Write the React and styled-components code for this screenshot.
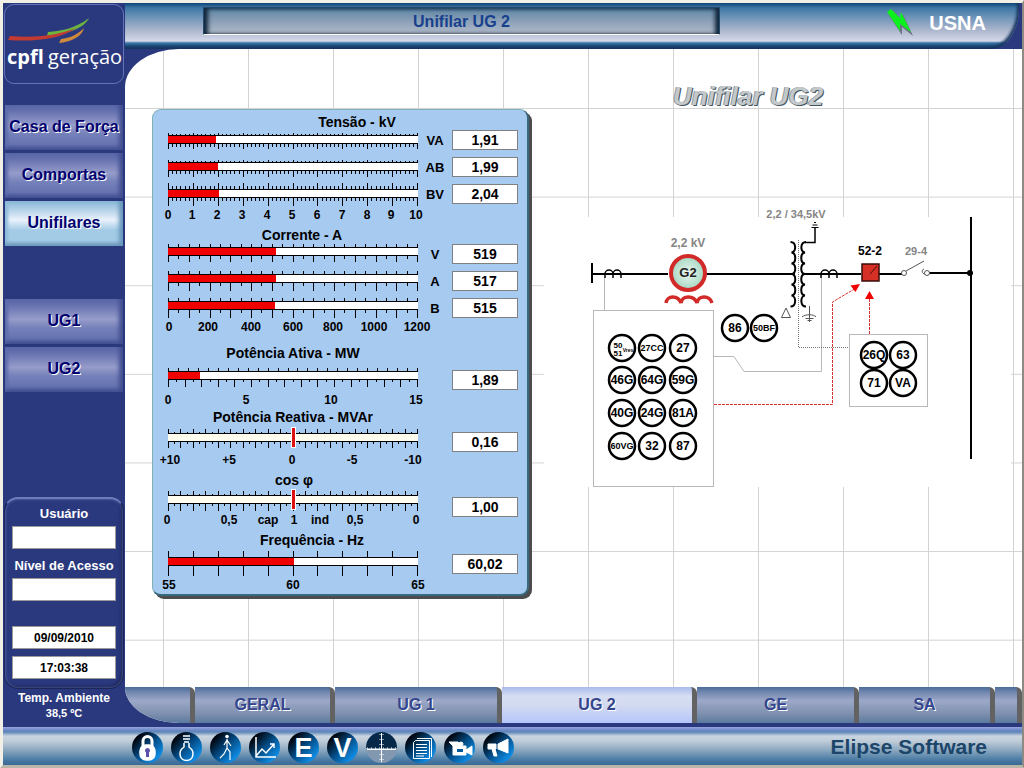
import React, { useId } from 'react';
import styled, { createGlobalStyle } from 'styled-components';

const GlobalStyle = createGlobalStyle`
    * {
        box-sizing: border-box;
    }
    body {
        margin: 0;
        font-family: 'Liberation Sans', Arial, sans-serif;
        font-weight: bold;
        background: #ece9d8;
    }
    button, input, output {
        font: inherit;
    }
`;

const Screen = styled.div`
    display: flex;
    flex-direction: column;
    min-height: 100vh;
    border: 3px solid #f1efe6;
    border-right: 2px solid #8d8a83;
    border-bottom-color: #b9b5a8;
    background: #2a397e;
`;

const Body = styled.div`
    display: flex;
    flex: 1;
`;

/* sidebar */

const Sidebar = styled.aside`
    display: flex;
    flex-direction: column;
    flex: none;
    width: 122px;
    padding: 1px 1px 6px 1px;
`;

const LogoBox = styled.div`
    height: 80px;
    border: 1px solid #6473b4;
    border-radius: 10px;
    svg {
        display: block;
        width: 100%;
        height: 100%;
    }
`;

const Nav = styled.nav`
    display: flex;
    flex-direction: column;
    gap: 3px;
    padding: 0 1px;
    margin-top: ${(p) => p.$top}px;
`;

const NavButton = styled.button`
    height: 45px;
    padding: 0 0 2px;
    border: 0;
    background: ${(p) =>
        p.$active
            ? 'linear-gradient(#8fbad8, #a9cbe4 15%, #eaf1fb 42%, #a3cbe6 65%, #a3cbe6 88%, #7fa6c4)'
            : 'linear-gradient(#5663a4, #6873b1 15%, #969cca 45%, #7480b9 65%, #6773b0 88%, #4a5798)'};
    box-shadow: ${(p) =>
        p.$active
            ? 'inset -4px -2px 4px #6796ba, inset 3px 2px 3px #8fbbda'
            : 'inset -4px -2px 4px #414e91, inset 3px 2px 3px #5f6cac'};
    color: #00006e;
    font-size: 16px;
    line-height: 20px;
    white-space: nowrap;
    display: flex;
    align-items: center;
    justify-content: center;
    text-shadow: 1px 1px 0 #fff;
    cursor: pointer;
`;

const UserPanel = styled.section`
    display: flex;
    flex-direction: column;
    margin-top: auto;
    padding: 7px 7px 9px 7px;
    border: 1px solid #1c2659;
    border-top: 2px solid #6c7cbb;
    border-radius: 14px;
    box-shadow: inset 0 0 3px #6c7cbb, inset -2px -2px 3px #18214f;
`;

const UserLabel = styled.label`
    color: #fff;
    font-size: 13px;
    line-height: 16px;
    text-align: center;
    white-space: nowrap;
    margin-bottom: 4px;
`;

const UserField = styled.input`
    width: 100%;
    height: 23px;
    padding: 0;
    border: 1px solid #9a9a9a;
    background: #fff;
    color: #000;
    font-size: 12px;
    text-align: center;
    margin-bottom: ${(p) => p.$after || 0}px;
`;

const Ambient = styled.p`
    margin: 2px 0 0;
    color: #fff;
    text-align: center;
    font-size: 12px;
    line-height: 15px;
`;

const Temperature = styled.span`
    display: block;
    font-size: 11px;
`;

/* top bar */

const Main = styled.main`
    display: flex;
    flex-direction: column;
    flex: 1;
    min-width: 0;
    padding-bottom: 4px;
`;

const TopBar = styled.header`
    display: flex;
    align-items: flex-start;
    height: 46px;
    margin-right: 3px;
    padding: 4px 33px 0 78px;
    border-bottom-right-radius: 28px 40px;
    background: linear-gradient(
        #0f4479,
        #3f77a6 5px,
        #6c93b8 14px,
        #a6b2ca 26px,
        #d6d9ea 38px,
        #3a74a4 40px,
        #1c4f80 43px,
        #14305f
    );
    box-shadow: inset -2px -2px 3px #17365f;
`;

const ScreenName = styled.h1`
    width: 517px;
    height: 28px;
    margin: 0;
    border: 1px solid #244a6b;
    border-bottom: 1px solid #fff;
    background: linear-gradient(#5d84a4, #8ba0b7 50%, #b0bac9);
    box-shadow: inset 5px 0 4px -1px #10263b, inset -5px 0 4px -1px #10263b, inset 0 2px 3px #3f6788;
    color: #17408c;
    font-size: 16px;
    line-height: 27px;
    text-align: center;
`;

const Station = styled.div`
    display: flex;
    align-items: center;
    gap: 15px;
    height: 32px;
    margin-left: auto;
    color: #fff;
    font-size: 20px;
`;

/* working area */

const Canvas = styled.div`
    display: flex;
    align-items: flex-start;
    flex: 1;
    gap: 15px;
    padding: 60px 11px 0 27px;
    border-top-left-radius: 54px 38px;
    background-color: #fff;
    background-image: linear-gradient(90deg, #d3d3d3 1px, transparent 1px),
        linear-gradient(#d3d3d3 1px, transparent 1px);
    background-size: 85px 100%, 100% calc(100% / 7.2);
    background-position: 38px 0, 0 59px;
`;

const GaugePanel = styled.section`
    flex: none;
    width: 377px;
    padding: 4px 9px 2px 15px;
    border: 1px solid #7fb0b4;
    border-right: 2px solid #39697d;
    border-bottom: 2px solid #39697d;
    border-radius: 9px;
    background: #a7caf0;
    box-shadow: 3px 3px 0 #4b4b50;
`;

const GaugeGroup = styled.div`
    display: flex;
    padding-top: ${(p) => p.$space}px;
`;

const Scales = styled.div`
    width: 250px;
    svg {
        display: block;
        overflow: visible;
    }
`;

const GroupTitle = styled.h2`
    margin: 0 0 ${(p) => p.$after}px;
    padding-left: ${(p) => p.$indent || 0}px;
    font-size: 14px;
    line-height: 16px;
    text-align: center;
    white-space: nowrap;
`;

const Rulers = styled.div`
    display: flex;
    flex-direction: column;
    gap: 18px;
    margin-bottom: ${(p) => p.$after}px;
`;

const Readouts = styled.div`
    display: flex;
    flex-direction: column;
    gap: 7px;
    flex: 1;
    padding-top: ${(p) => p.$top}px;
`;

const Readout = styled.label`
    display: flex;
    align-items: center;
    justify-content: flex-end;
    height: 20px;
    font-size: 13px;
`;

const Phase = styled.span`
    flex: 1;
    text-align: center;
`;

const Value = styled.output`
    width: 66px;
    height: 20px;
    border: 1px solid #808080;
    background: #fff;
    font-size: 14px;
    line-height: 18px;
    text-align: center;
`;

const DiagramColumn = styled.section`
    flex: 1;
    min-width: 0;
    margin-top: -27px;
`;

const DiagramTitle = styled.h2`
    margin: 0 0 107px;
    padding-left: 129px;
    color: #c3c8cb;
    font-size: 26px;
    line-height: 28px;
    font-style: italic;
    white-space: nowrap;
    text-shadow: 1px 1px 0 #44565f, -1px 0 0 #8b979d;
`;

const DiagramSvg = styled.svg`
    display: block;
    width: 100%;
    background: #fff;
    overflow: visible;
`;

/* tabs and footer */

const Tabs = styled.nav`
    display: flex;
    height: 36px;
    overflow: hidden;
    border-bottom-left-radius: 54px 36px;
    background: #fff;
`;

const Tab = styled.button`
    flex: ${(p) => p.$grow} 1 0;
    min-width: 0;
    padding: 0;
    border: 0;
    border-right: 5px solid #626262;
    border-top-right-radius: 6px;
    background: ${(p) =>
        p.$active
            ? 'linear-gradient(#a9b9ea, #d6def4 25%, #d3daf0 50%, #b5c6fb)'
            : 'linear-gradient(#496d98, #7388b0 15%, #9da8c8 38%, #7d90ae 75%, #5b7aa0)'};
    color: #35458c;
    font-size: 16px;
    text-shadow: 1px 1px 0 #fff;
    cursor: pointer;
`;

const Footer = styled.footer`
    display: flex;
    align-items: center;
    height: 38px;
    padding: 2px 35px 0 129px;
    background: linear-gradient(
        #98a6e0,
        #6d8ac6 3px,
        #5f86b8 5px,
        #c9d5e0 9px,
        #c0ccd8 14px,
        #8ba8c0 23px,
        #4a7aa3 33px,
        #3a6a94
    );
`;

const Tools = styled.div`
    display: flex;
    gap: 8px;
`;

const Tool = styled.button`
    width: 31px;
    height: 31px;
    padding: 0;
    border: 0;
    border-radius: 50%;
    background: ${(p) =>
        p.$split
            ? 'linear-gradient(#06294a 52%, #8298b0 52%)'
            : 'linear-gradient(135deg, #00060f 18%, #04508c 52%, #0f8ae0 82%)'};
    cursor: pointer;
    svg {
        display: block;
    }
`;

const Brand = styled.span`
    margin-left: auto;
    color: #1b4569;
    font-size: 21px;
    white-space: nowrap;
`;

const groups = [
    {
        title: 'Tensão - kV', indent: 128, space: 0, lead: 5, tail: 10, readTop: 16,
        rows: [
            { phase: 'VA', value: '1,91', fill: 0.191, up: [2, 1], down: [5, 3] },
            { phase: 'AB', value: '1,99', fill: 0.199, up: [2, 1], down: [6, 3] },
            { phase: 'BV', value: '2,04', fill: 0.204, up: [6, 3], down: [8, 3] },
        ],
        major: 10, minor: 6,
        labels: [[0, '0'], [24, '1'], [49, '2'], [74, '3'], [99, '4'], [124, '5'], [149, '6'], [174, '7'], [199, '8'], [223, '9'], [248, '10']],
    },
    {
        title: 'Corrente - A', indent: 18, space: 5, lead: 4, tail: 10, readTop: 17,
        rows: [
            { phase: 'V', value: '519', fill: 0.432, up: [3, 3], down: [6, 3] },
            { phase: 'A', value: '517', fill: 0.431, up: [3, 3], down: [8, 3] },
            { phase: 'B', value: '515', fill: 0.429, up: [3, 3], down: [8, 3] },
        ],
        major: 12, minor: 2,
        labels: [[1, '0'], [40, '200'], [83, '400'], [125, '600'], [165, '800'], [206, '1000'], [249, '1200']],
    },
    {
        title: 'Potência Ativa - MW', indent: 0, space: 11, lead: 10, tail: 13, readTop: 25,
        rows: [{ value: '1,89', fill: 0.126, up: [3, 3], down: [7, 2] }],
        major: 15, minor: 2, topMajor: 25, topMinor: 1,
        labels: [[0, '0'], [78, '5'], [163, '10'], [248, '15']],
    },
    {
        title: 'Potência Reativa - MVAr', indent: 0, space: 2, lead: 8, tail: 11, readTop: 23,
        rows: [{ value: '0,16', marker: 0.5, up: [4, 1], down: [6, 2] }],
        major: 20, minor: 2,
        labels: [[2, '+10'], [61, '+5'], [124, '0'], [184, '-5'], [245, '-10']],
    },
    {
        title: 'cos φ', indent: 2, space: 5, lead: 7, tail: 9, readTop: 25,
        rows: [{ value: '1,00', marker: 0.5, up: [4, 1], down: [7, 2] }],
        major: 20, minor: 2,
        labels: [[-1, '0'], [61, '0,5'], [100, 'cap'], [126, '1'], [152, 'ind'], [187, '0,5'], [248, '0']],
    },
    {
        title: 'Frequência - Hz', indent: 38, space: 5, lead: 9, tail: 12, readTop: 22,
        rows: [{ value: '60,02', fill: 0.502, up: [6, 6], down: [10, 10] }],
        major: 10, minor: 1,
        labels: [[1, '55'], [125, '60'], [250, '65']],
    },
];

const ticks = (major, minor, up, sizes) => {
    const total = major * minor;
    let d = '';
    for (let i = 0; i <= total; i++) {
        const size = i % minor === 0 ? sizes[0] : sizes[1];
        const x = Math.round((i * 249) / total);
        d += up ? `M${x} 0h1v${-size}h-1z` : `M${x} 9h1v${size}h-1z`;
    }
    return d;
};

const Ruler = ({ row, group }) => (
    <svg width="250" height="9" viewBox="0 0 250 9" shapeRendering="crispEdges">
        <rect width="250" height="9" fill="#000" />
        <rect y="1" width="250" height="7" fill={row.marker ? '#fffdf0' : '#fff'} />
        {row.fill && <rect y="1" width={Math.round(row.fill * 250)} height="7" fill="#f00000" />}
        <path d={ticks(group.topMajor || group.major, group.topMinor || group.minor, true, row.up)} />
        <path d={ticks(group.major, group.minor, false, row.down)} />
        {row.marker && (
            <>
                <rect x={row.marker * 250 - 2} y="-6" width="5" height="21" fill="#fff" />
                <rect x={row.marker * 250 - 1} y="-5" width="3" height="19" fill="#dc1010" />
            </>
        )}
    </svg>
);

const Gauge = ({ group }) => {
    const id = useId();
    return (
        <GaugeGroup $space={group.space}>
            <Scales>
                <GroupTitle id={id} $indent={group.indent} $after={group.lead}>
                    {group.title}
                </GroupTitle>
                <Rulers $after={group.tail}>
                    {group.rows.map((row) => (
                        <Ruler key={row.value} row={row} group={group} />
                    ))}
                </Rulers>
                <svg width="250" height="14" fontSize="12" textAnchor="middle">
                    {group.labels.map(([x, text]) => (
                        <text key={x} x={x} y="11">{text}</text>
                    ))}
                </svg>
            </Scales>
            <Readouts $top={group.readTop}>
                {group.rows.map((row) => (
                    <Readout key={row.value}>
                        {row.phase && <Phase>{row.phase}</Phase>}
                        <Value aria-labelledby={row.phase ? undefined : id}>{row.value}</Value>
                    </Readout>
                ))}
            </Readouts>
        </GaugeGroup>
    );
};

const relays = [
    [652, 348, '27CC', 9], [683, 348, '27', 12],
    [622, 380, '46G', 12], [652, 380, '64G', 12], [683, 380, '59G', 12],
    [622, 413, '40G', 12], [652, 413, '24G', 12], [683, 413, '81A', 12],
    [622, 446, '60VG', 9], [652, 446, '32', 12], [683, 446, '87', 12],
    [735, 328, '86', 12], [764, 328, '50BF', 9],
    [874, 355, '26Q', 12], [903, 355, '63', 12],
    [874, 383, '71', 12], [903, 383, 'VA', 12],
];

const Diagram = () => (
    <DiagramSvg viewBox="544 217 467 270" textAnchor="middle">
        <defs>
            <radialGradient id="rotor">
                <stop offset="0" stopColor="#eef8f0" />
                <stop offset="1" stopColor="#a3d6c0" />
            </radialGradient>
        </defs>

        <g fill="none" stroke="#b8b8b8">
            <rect x="593.5" y="310.5" width="120" height="176" />
            <rect x="849.5" y="334.5" width="78" height="72" />
            <path d="M604.5 278v32M714 356.5h20l10 15h77.500V278" />
        </g>
        <path d="M798.500 240v107.500H849" fill="none" stroke="#777" strokeDasharray="1 1" />

        <g fill="none" stroke="#d83030" strokeDasharray="3 1">
            <path d="M714 404.500h118.500V302l22-13" />
            <path d="M869.500 334v-36" />
        </g>
        <path d="M860 284l-4.500 8-5-6.500zM869.500 291l4.500 8h-9z" fill="#f00000" />

        <g stroke="#000" strokeWidth="2" fill="none">
            <path d="M592 263v20M592 274h76M706 274h89M802 274h59M879 274h24M929 273h41" />
            <path d="M971 217v242" />
            <g strokeWidth="1.500">
                <path d="M605 278v-4a4 4 0 0 1 8 0v4M613 274a4 4 0 0 1 8 0v4" />
                <path d="M821 278v-4a4 4 0 0 1 8 0v4M829 274a4 4 0 0 1 8 0v4" />
            </g>
            <path d="M790.500 242c6 0 6 10 1 10.500c5 .5 5 10.500 0 11c5 .5 5 10 0 10.500c5 .5 5 10 0 10.500c5 .5 5 10.500 0 11c5 .5 5 11-1 11" />
            <path d="M806 242c-6 0-6 10-1 10.500c-5 .5-5 10.500 0 11c-5 .5-5 10 0 10.500c-5 .5-5 10 0 10.500c-5 .5-5 10.500 0 11c-5 .5-5 11 1 11" />
            <path d="M805 242.500h10V228" strokeWidth="1.500" />
        </g>
        <path d="M811.500 227.500h7M812.500 225h5M814 222.500h2" stroke="#000" />
        <path d="M781.500 317.500h9l-4.500-9.500zM809.500 306v16M802 317c3-3 12-3 14 0M805.500 318.500h8M807.500 320.500h4" fill="none" stroke="#555" />
        <circle cx="970" cy="273" r="3" />

        <circle cx="688" cy="273" r="17" fill="url(#rotor)" stroke="#d12a28" strokeWidth="4" />
        <path d="M666 303c1-8 12-8 15 0c1-8 13-8 16 0c1-8 13-8 15 0" fill="none" stroke="#d12a28" strokeWidth="3.500" />
        <text x="688" y="277" fontSize="13" fill="#222">G2</text>
        <g fill="#858585">
            <text x="688" y="247" fontSize="12">2,2 kV</text>
            <text x="796" y="218" fontSize="11">2,2 / 34,5kV</text>
            <text x="916" y="255" fontSize="11">29-4</text>
        </g>
        <text x="870" y="255" fontSize="12">52-2</text>

        <rect x="862" y="264" width="17" height="17" fill="#d52f26" stroke="#3a0d0a" strokeWidth="1.500" />
        <path d="M870 274l7-8" stroke="#4a1010" />
        <g fill="#fff" stroke="#555">
            <path d="M906 271l18-10M924 269c-3 1-2 5 1 5" fill="none" />
            <circle cx="904" cy="273" r="2.500" />
            <circle cx="927" cy="273" r="2.500" />
        </g>

        <g fill="#fff" stroke="#000" strokeWidth="2.500">
            <circle cx="622" cy="348" r="13" />
            {relays.map(([x, y]) => <circle key={`${x}-${y}`} cx={x} cy={y} r="13" />)}
        </g>
        {relays.map(([x, y, name, size]) => (
            <text key={name} x={x} y={y + Math.round(size / 3)} fontSize={size}>{name}</text>
        ))}
        <text x="618" y="348" fontSize="8">50</text>
        <text x="618" y="356" fontSize="8">51</text>
        <text x="628" y="352" fontSize="5">Vres</text>
    </DiagramSvg>
);

const Logo = () => (
    <svg viewBox="0 0 118 78" role="img" aria-label="cpfl geração">
        <path d="M43 27c14-1 28-4 41-14c-4 10-24 17-42 18z" fill="#6cb43f" />
        <path d="M5 31c24 2 45 0 66-8c-15 11-42 14-68 12z" fill="#c23a32" />
        <path d="M56 34c9-1 16-4 23-11c-2 9-14 14-25 15z" fill="#d08a3c" />
        <g fill="#fff" fontFamily="'Open Sans', sans-serif">
            <text x="2" y="59" fontSize="20" fontWeight="700">cpfl</text>
            <text x="43" y="59" fontSize="20" fontWeight="400">geração</text>
        </g>
    </svg>
);

const Bolt = () => (
    <svg width="28" height="28" viewBox="0 0 28 28">
        <path d="M7 1L16 11L17 5L27 27L16 18L16 26L2 5z" fill="#6b7480" />
        <path d="M5 0L14 9L15 3L25 23L14 15L14 22L1 3z" fill="#0df020" />
    </svg>
);

const toolIcons = [
    ['Bloqueio', (
        <g key="i">
            <path d="M11 15V9a4.500 4.500 0 0 1 9 0v6" fill="none" stroke="#fff" strokeWidth="3" />
            <rect x="8" y="13" width="15" height="15" rx="6" fill="#fff" />
            <path d="M15.500 16a2.500 2.500 0 0 1 1.500 4.500V25h-3v-4.500A2.500 2.500 0 0 1 15.500 16z" fill="#5a50a8" stroke="none" />
        </g>
    )],
    ['Iluminação', <path key="i" d="M12 4h7M12 7h7M13 10h5M13 11v4c-7 5-4 13.500 2.500 13.500s9.500-8.500 2.500-13.500v-4" />],
    ['Operador', (
        <g key="i" strokeWidth="1.200">
            <circle cx="17" cy="4.500" r="1.200" fill="#fff" />
            <path d="M17 7v9l3 4v8M17 16l-3 6-4 4M17 8l-3 5M17 8l4 6" />
        </g>
    )],
    ['Gráficos', <path key="i" d="M7 5v20h20M7 24l6-7 4 4 8-9M21 12h4v4" />],
    ['Eventos', <text key="i" x="15.500" y="25" fontSize="27" textAnchor="middle" fill="#fff" stroke="none">E</text>],
    ['Variáveis', <text key="i" x="15.500" y="25" fontSize="27" textAnchor="middle" fill="#fff" stroke="none">V</text>],
    ['Osciloscópio', (
        <g key="i" strokeWidth="1">
            <path d="M15.500 1v29M1 17.500h29" />
            <path d="M1 16h29" strokeDasharray="1 3" />
            <path d="M14 2v27M17 2v27" strokeDasharray="1 4" />
        </g>
    )],
    ['Relatórios', <path key="i" d="M10.500 8.500h14v18h-16v-16zM12 6.500h14.500V25M11 12.500h11M11 15.500h11M11 18.500h11M11 21.500h11M11 24h8" strokeWidth="1" />],
    ['Câmera', (
        <g key="i" fill="#fff" strokeWidth="1">
            <path d="M9 14h13v9H9zM22 18l6-4v9l-6-3zM5 10h9l4 4H9z" />
            <circle cx="17" cy="12" r="2" />
            <path d="M13 17h6v3h-6z" fill="#075a9a" stroke="none" />
        </g>
    )],
    ['Alarmes', <path key="i" d="M5 12h8v5h-1l2 7h-3l-2-7H5zM15 12l10-5v14l-10-4z" fill="#fff" strokeWidth="1" />],
];

// grow values leave out the 5px divider that each tab carries
const tabs = [
    ['', 65], ['GERAL', 135], ['UG 1', 162], ['UG 2', 190], ['GE', 157], ['SA', 131], ['', 22],
];

const App = () => {
    return (
        <>
            <GlobalStyle />
            <Screen>
                <Body>
                    <Sidebar>
                        <LogoBox><Logo /></LogoBox>
                        <Nav $top={21}>
                            <NavButton>Casa de Força</NavButton>
                            <NavButton>Comportas</NavButton>
                            <NavButton $active>Unifilares</NavButton>
                        </Nav>
                        <Nav $top={53}>
                            <NavButton>UG1</NavButton>
                            <NavButton>UG2</NavButton>
                        </Nav>
                        <UserPanel>
                            <UserLabel htmlFor="user">Usuário</UserLabel>
                            <UserField id="user" $after={9} />
                            <UserLabel htmlFor="level">Nível de Acesso</UserLabel>
                            <UserField id="level" $after={25} />
                            <UserField aria-label="Data" defaultValue="09/09/2010" readOnly $after={7} />
                            <UserField aria-label="Hora" defaultValue="17:03:38" readOnly />
                        </UserPanel>
                        <Ambient>
                            Temp. Ambiente
                            <Temperature>38,5 ºC</Temperature>
                        </Ambient>
                    </Sidebar>
                    <Main>
                        <TopBar>
                            <ScreenName>Unifilar UG 2</ScreenName>
                            <Station><Bolt />USNA</Station>
                        </TopBar>
                        <Canvas>
                            <GaugePanel>
                                {groups.map((group) => <Gauge key={group.title} group={group} />)}
                            </GaugePanel>
                            <DiagramColumn>
                                <DiagramTitle>Unifilar UG2</DiagramTitle>
                                <Diagram />
                            </DiagramColumn>
                        </Canvas>
                        <Tabs>
                            {tabs.map(([name, grow], i) => (
                                <Tab key={i} $grow={grow} $active={name === 'UG 2'}>{name}</Tab>
                            ))}
                        </Tabs>
                    </Main>
                </Body>
                <Footer>
                    <Tools>
                        {toolIcons.map(([name, icon]) => (
                            <Tool key={name} aria-label={name} $split={name === 'Osciloscópio'}>
                                <svg width="31" height="31" viewBox="0 0 31 31" fill="none" stroke="#fff" strokeWidth="1.500">
                                    {icon}
                                </svg>
                            </Tool>
                        ))}
                    </Tools>
                    <Brand>Elipse Software</Brand>
                </Footer>
            </Screen>
        </>
    );
};

export default App;
